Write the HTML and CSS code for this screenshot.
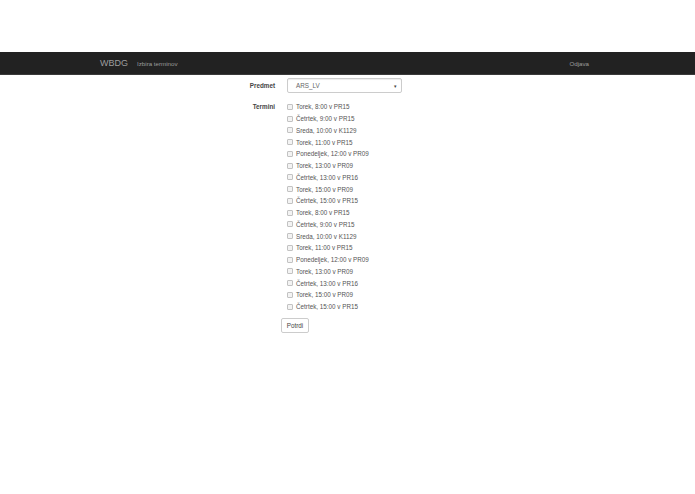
FILE: index.html
```html
<!DOCTYPE html>
<html lang="sl">
<head>
<meta charset="UTF-8">
<title>WBDG - Izbira terminov</title>
<link rel="stylesheet" href="styles.css">
</head>
<body>
  <div class="top-space"></div>
  <nav class="navbar">
    <div class="nav-left">
      <span class="brand">WBDG</span>
      <span class="nav-link">Izbira terminov</span>
    </div>
    <span class="nav-link">Odjava</span>
  </nav>

  <form class="form">
    <div class="row row-select">
      <label class="label" for="predmet">Predmet</label>
      <div class="select">
        <span>ARS_LV</span>
        <span class="caret">&#9662;</span>
      </div>
    </div>

    <div class="row row-checks">
      <span class="label">Termini</span>
      <div class="checks">
        <label class="check"><input type="checkbox"> Torek, 8:00 v PR15</label>
        <label class="check"><input type="checkbox"> Četrtek, 9:00 v PR15</label>
        <label class="check"><input type="checkbox"> Sreda, 10:00 v K1129</label>
        <label class="check"><input type="checkbox"> Torek, 11:00 v PR15</label>
        <label class="check"><input type="checkbox"> Ponedeljek, 12:00 v PR09</label>
        <label class="check"><input type="checkbox"> Torek, 13:00 v PR09</label>
        <label class="check"><input type="checkbox"> Četrtek, 13:00 v PR16</label>
        <label class="check"><input type="checkbox"> Torek, 15:00 v PR09</label>
        <label class="check"><input type="checkbox"> Četrtek, 15:00 v PR15</label>
        <label class="check"><input type="checkbox"> Torek, 8:00 v PR15</label>
        <label class="check"><input type="checkbox"> Četrtek, 9:00 v PR15</label>
        <label class="check"><input type="checkbox"> Sreda, 10:00 v K1129</label>
        <label class="check"><input type="checkbox"> Torek, 11:00 v PR15</label>
        <label class="check"><input type="checkbox"> Ponedeljek, 12:00 v PR09</label>
        <label class="check"><input type="checkbox"> Torek, 13:00 v PR09</label>
        <label class="check"><input type="checkbox"> Četrtek, 13:00 v PR16</label>
        <label class="check"><input type="checkbox"> Torek, 15:00 v PR09</label>
        <label class="check"><input type="checkbox"> Četrtek, 15:00 v PR15</label>
      </div>
    </div>

    <div class="actions">
      <button type="button" class="btn">Potrdi</button>
    </div>
  </form>
</body>
</html>
```

FILE: styles.css
```css
body {
  margin: 0;
  font-family: "Liberation Sans", Arial, sans-serif;
  font-size: 6.3px;
  color: #444;
  background: #fff;
}
.top-space {
  height: 52px;
}
.navbar {
  height: 22px;
  background-color: #222;
  border-bottom: 1px solid #3a3a3a;
  display: flex;
  align-items: center;
  justify-content: space-between;
  padding: 0 106px 0 100px;
}
.nav-left {
  display: flex;
  align-items: center;
  gap: 9px;
}
.brand {
  color: #9d9d9d;
  font-size: 9px;
}
.nav-link {
  color: #9d9d9d;
  font-size: 6.2px;
}
.form {
  width: 200px;
  margin-left: 230px;
}
.row {
  display: flex;
  align-items: flex-start;
}
.row-select {
  margin-top: 3px;
  align-items: center;
  height: 15px;
}
.label {
  width: 45px;
  text-align: right;
  font-weight: bold;
  color: #444;
  margin-right: 12px;
}
.select {
  width: 101px;
  height: 13px;
  border: 1px solid #ccc;
  border-radius: 2px;
  box-shadow: inset 0 1px 1px rgba(0, 0, 0, 0.075);
  display: flex;
  align-items: center;
  justify-content: space-between;
  padding: 0 4px 0 8px;
  color: #666;
}
.caret {
  font-size: 5px;
  color: #444;
}
.row-checks {
  margin-top: 8px;
}
.row-checks .label {
  line-height: 11.75px;
}
.checks {
  display: flex;
  flex-direction: column;
}
.check {
  display: flex;
  align-items: center;
  height: 11.75px;
  color: #555;
}
.check input {
  appearance: none;
  width: 6px;
  height: 6px;
  margin: 0 3px 0 0;
  border: 1px solid #c2c2c2;
  border-radius: 1px;
  background: #f3f3f3;
}
.actions {
  margin: 5px 0 0 51px;
}
.btn {
  font-family: "Liberation Sans", Arial, sans-serif;
  font-size: 6.3px;
  color: #444;
  background: #fff;
  border: 1px solid #ccc;
  border-radius: 2px;
  padding: 0 4px;
  height: 15px;
  width: 28px;
}
```
